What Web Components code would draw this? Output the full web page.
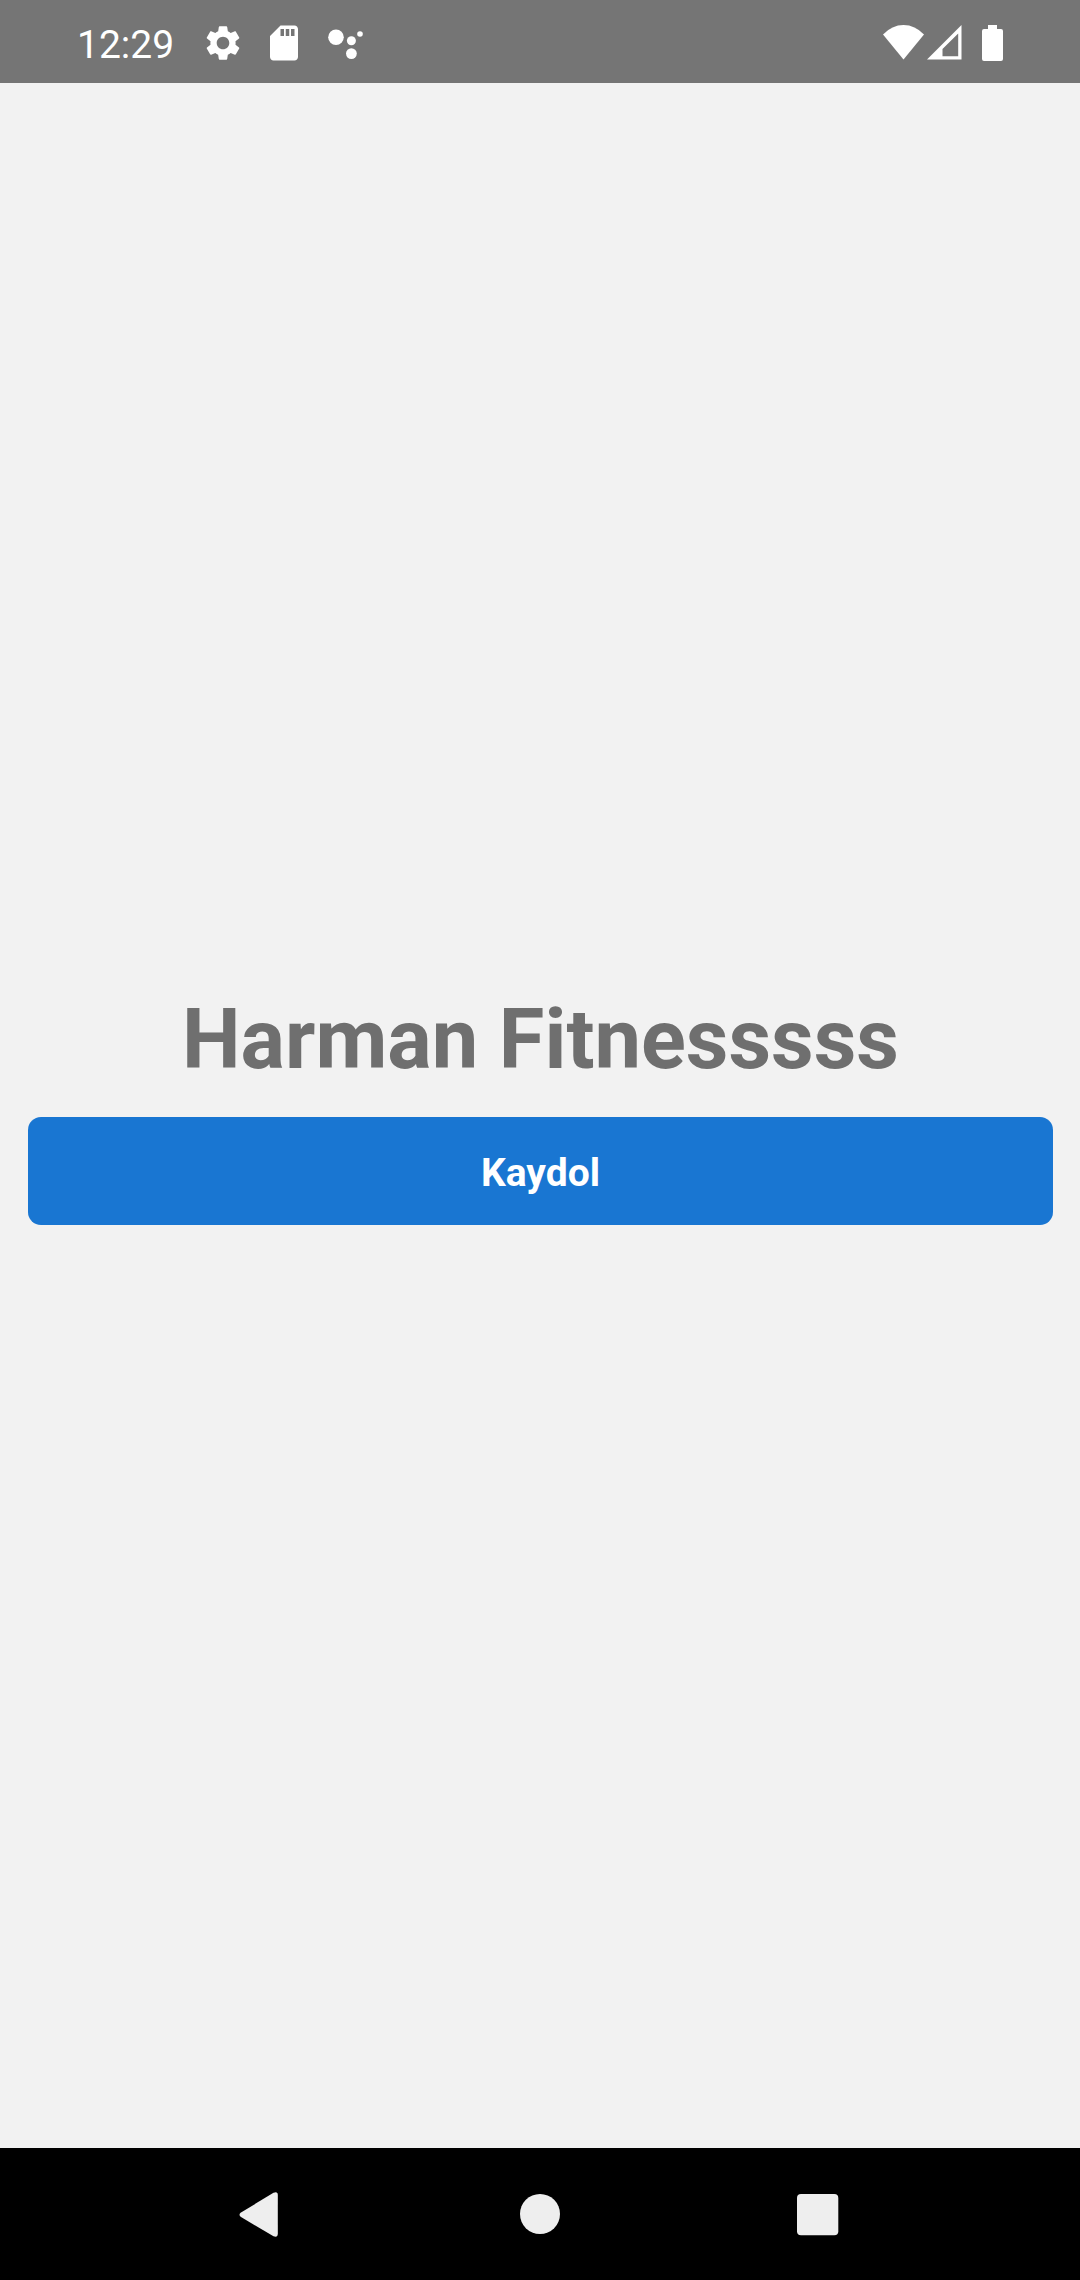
<!DOCTYPE html>
<html lang="tr">
<head>
<meta charset="utf-8">
<meta name="viewport" content="width=device-width, initial-scale=1">
<title>Harman Fitnesssss</title>
<style>
  html, body { height: 100%; }
  body { margin: 0; font-family: Roboto, "Noto Sans", sans-serif; background: #f2f2f2; }
</style>
</head>
<body>
<phone-screen>
  <status-bar slot="status" time="12:29"></status-bar>
  <welcome-panel>
    <span slot="title">Harman Fitnesssss</span>
    <action-button>Kaydol</action-button>
  </welcome-panel>
  <nav-bar slot="nav"></nav-bar>
</phone-screen>
<script>
function define(name, html, setup) {
  const template = document.createElement('template');
  template.innerHTML = html;
  customElements.define(name, class extends HTMLElement {
    constructor() {
      super();
      this.attachShadow({ mode: 'open' }).append(template.content.cloneNode(true));
    }
    connectedCallback() { if (setup) setup(this); }
  });
}

define('phone-screen', `
  <style>
    :host { display: flex; flex-direction: column; min-height: 100vh; }
    main { flex: 1; display: flex; flex-direction: column; justify-content: center; }
  </style>
  <slot name="status"></slot>
  <main><slot></slot></main>
  <slot name="nav"></slot>`);

define('status-bar', `
  <style>
    :host { display: flex; align-items: center; justify-content: space-between; box-sizing: border-box;
      height: 83px; padding: 3px 77px 0; background: #757575; color: #fff; }
    .group { display: flex; align-items: center; }
    .notices { gap: 19px; }
    time { font-size: 39px; line-height: 44px; padding-top: 3px; margin-right: 9px; }
    svg { display: block; fill: currentColor; }
    .battery { margin-left: 19px; }
  </style>
  <div class="group notices">
    <time></time>
    <svg width="42" height="42" viewBox="0 0 24 24" aria-hidden="true"><path d="M19.14 12.94c.04-.3.06-.61.06-.94 0-.32-.02-.64-.07-.94l2.03-1.58c.18-.14.23-.41.12-.61l-1.92-3.32c-.12-.22-.37-.29-.59-.22l-2.39.96c-.5-.38-1.03-.7-1.62-.94l-.36-2.54c-.04-.24-.24-.41-.48-.41h-3.84c-.24 0-.43.17-.47.41l-.36 2.54c-.59.24-1.13.57-1.62.94l-2.39-.96c-.22-.08-.47 0-.59.22L2.74 8.87c-.12.21-.08.47.12.61l2.03 1.58c-.05.3-.09.63-.09.94s.02.64.07.94l-2.03 1.58c-.18.14-.23.41-.12.61l1.92 3.32c.12.22.37.29.59.22l2.39-.96c.5.38 1.03.7 1.62.94l.36 2.54c.05.24.24.41.48.41h3.84c.24 0 .44-.17.47-.41l.36-2.54c.59-.24 1.13-.56 1.62-.94l2.39.96c.22.08.47 0 .59-.22l1.92-3.32c.12-.22.07-.47-.12-.61l-2.01-1.58zM12 15.6c-1.98 0-3.6-1.62-3.6-3.6s1.62-3.6 3.6-3.6 3.6 1.62 3.6 3.6-1.62 3.6-3.6 3.6z"/></svg>
    <svg width="42" height="42" viewBox="0 0 24 24" aria-hidden="true"><path d="M18 2h-8L4 8v12c0 1.1.9 2 2 2h12c1.1 0 2-.9 2-2V4c0-1.1-.9-2-2-2zm-6 6h-2V4h2v4zm3 0h-2V4h2v4zm3 0h-2V4h2v4z"/></svg>
    <svg width="42" height="42" viewBox="0 0 42 42" aria-hidden="true"><circle cx="12" cy="15.3" r="7.8"/><circle cx="27.4" cy="18.8" r="4.5"/><circle cx="27.4" cy="31.6" r="5.4"/><circle cx="36" cy="12" r="2.8"/></svg>
  </div>
  <div class="group">
    <svg width="42" height="36" viewBox="0 0 42 36" aria-hidden="true"><path d="M0 9.500Q9 0 20.500 0Q32 0 41 9.500L20.500 34.500Z"/></svg>
    <svg width="38" height="36" viewBox="0 0 38 36" aria-hidden="true"><path fill-rule="evenodd" d="M36.500 0V34.500H2ZM33.200 8.500L17.500 24V31.200H33.200Z"/></svg>
    <svg class="battery" width="21" height="36" viewBox="0 0 21 36" aria-hidden="true"><path d="M6 0H15V4H19Q21 4 21 6V34Q21 36 19 36H2Q0 36 0 34V6Q0 4 2 4H6Z"/></svg>
  </div>`,
  el => { el.shadowRoot.querySelector('time').textContent = el.getAttribute('time'); });

define('welcome-panel', `
  <style>
    :host { display: flex; flex-direction: column; gap: 28px; padding: 0 27px 15px 28px; }
    h1 { margin: 0; font-size: 83px; line-height: 98px; font-weight: 700; text-align: center; color: #6f6f6f; }
  </style>
  <h1><slot name="title"></slot></h1>
  <slot></slot>`);

define('action-button', `
  <style>
    :host { display: block; }
    button { display: block; width: 100%; margin: 0; padding: 33px 24px 29px; border: 0; border-radius: 13px;
      background: #1976d2; color: #fff; font: 700 39px/46px Roboto, "Noto Sans", sans-serif; cursor: pointer; }
  </style>
  <button type="button"><slot></slot></button>`);

define('nav-bar', `
  <style>
    :host { display: block; background: #000; }
    nav { display: flex; justify-content: center; align-items: center; height: 132px; gap: 194px; }
    button { display: block; padding: 0; border: 0; background: none; color: #eee; }
    svg { display: block; fill: currentColor; }
  </style>
  <nav>
    <button type="button" aria-label="Geri"><svg width="84" height="84" viewBox="0 0 84 84"><path d="M21 40.500L53.500 20.800Q57.800 19 57.800 23V61.500Q57.800 66 53.500 64.300L21 45Q18 42.700 21 40.500Z"/></svg></button>
    <button type="button" aria-label="Ana ekran"><svg width="84" height="84" viewBox="0 0 84 84"><circle cx="42" cy="42" r="20"/></svg></button>
    <button type="button" aria-label="Son uygulamalar"><svg width="84" height="84" viewBox="0 0 84 84"><rect x="21" y="22" width="41.300" height="41.300" rx="4"/></svg></button>
  </nav>`);
</script>
</body>
</html>
